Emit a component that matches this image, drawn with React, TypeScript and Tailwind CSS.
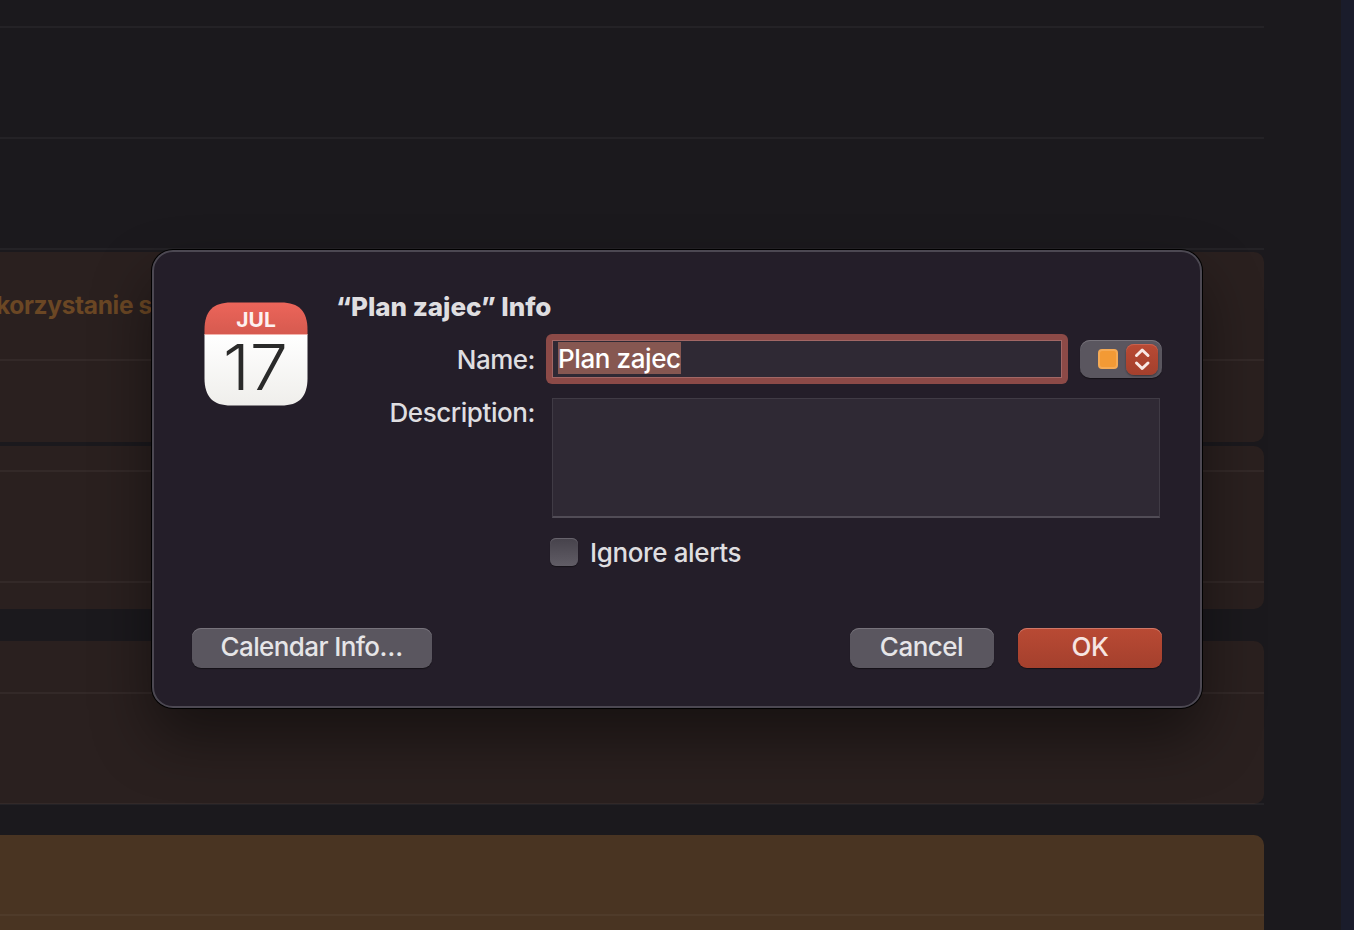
import React from 'react';

const hours = [0, 1, 2, 3, 4, 5, 6, 7, 8];

function CalendarIcon() {
  return (
    <svg width="112" height="112" viewBox="0 0 112 112" className="block" aria-hidden="true">
      <defs>
        <linearGradient id="red" x1="0" y1="0" x2="0" y2="1">
          <stop offset="0" stopColor="#ec655a" />
          <stop offset="1" stopColor="#d65a4f" />
        </linearGradient>
        <linearGradient id="paper" x1="0" y1="0" x2="0" y2="1">
          <stop offset="0" stopColor="#ffffff" />
          <stop offset="1" stopColor="#efeeeb" />
        </linearGradient>
        <clipPath id="tile">
          <path d="M4.500 38V32C4.500 13 13 4.500 31 4.500H81C99 4.500 107.500 13 107.500 32V80C107.500 99 99 107.500 81 107.500H31C13 107.500 4.500 99 4.500 80Z" />
        </clipPath>
      </defs>
      <g clipPath="url(#tile)">
        <rect x="4" y="4" width="104" height="32.500" fill="url(#red)" />
        <rect x="4" y="36.500" width="104" height="72" fill="url(#paper)" />
        <rect x="4" y="36" width="104" height="1" fill="#f3b3ac" />
      </g>
      <text x="56" y="28.500" textAnchor="middle" fontSize="20.500" fontWeight="700" fill="#fdf1f0" textLength="39.500" lengthAdjust="spacingAndGlyphs">JUL</text>
      <text x="55.500" y="92" textAnchor="middle" fontSize="63" fontWeight="300" fill="#2a2a2a" textLength="65" lengthAdjust="spacingAndGlyphs">17</text>
    </svg>
  );
}

function Schedule() {
  return (
    <div className="grid h-[930px] w-[1264px] overflow-hidden">
      <div className="col-start-1 row-start-1 flex flex-col pt-[252px]">
        <div className="h-[190px] shrink-0 rounded-r-[10px] bg-[#2a201f] pt-[36px]">
          <p className="ml-[-4px] whitespace-nowrap text-[24.5px] font-bold leading-[34px] tracking-[-0.35px] text-[#6b4724]">korzystanie s</p>
        </div>
        <div className="mt-1 h-[163px] shrink-0 rounded-r-[10px] bg-[#2a201f]" />
        <div className="mt-8 h-[163px] shrink-0 rounded-r-[10px] bg-[#2a201f]" />
        <div className="mt-[31px] h-[111px] shrink-0 rounded-tr-[10px] bg-[#493422]" />
      </div>
      <div className="col-start-1 row-start-1 flex flex-col gap-[109px] pt-[26px]">
        {hours.map((h) => (
          <div key={h} className="h-[2px] shrink-0 bg-white/[0.045] last:bg-white/[0.035]" />
        ))}
      </div>
    </div>
  );
}

function InfoDialog() {
  return (
    <section className="absolute left-[152px] top-[250px] flex h-[458px] w-[1050px] flex-col rounded-[21px] border-2 border-[#4c4852] bg-[#241e29] text-[26px] font-[450] leading-[32px] text-[#dfdee0] shadow-[0_0_0_1px_#000000,0_30px_60px_0_rgba(0,0,0,0.45)]">
      <div className="flex pl-[46px] pt-[38px]">
        <div className="mt-2 shrink-0">
          <CalendarIcon />
        </div>
        <div className="ml-[24px] w-[826px] pl-px pt-px">
          <h1 className="ml-[-1px] whitespace-nowrap font-extrabold tracking-[-0.03px]">“Plan zajec” Info</h1>
          <div className="mt-[11px] flex items-start">
            <label className="mt-[10px] w-[198px] shrink-0 text-right tracking-[-0.5px]">Name:</label>
            <div className="ml-[11px] h-[50px] w-[522px] shrink-0 rounded-[6px] bg-[#8c4a47] p-[6px]">
              <div className="flex h-[38px] items-start border border-[#a26765] bg-[#2f2934] pl-[5px] pt-[1px]">
                <span className="h-[32px] w-[123px] whitespace-nowrap bg-[#865751] leading-[34px] tracking-[-0.4px] text-white">Plan zajec</span>
              </div>
            </div>
            <button className="ml-3 mt-[6px] flex h-[38px] w-[82px] shrink-0 items-center rounded-[10px] bg-[#5a565f] pl-[18px] shadow-[inset_0_1px_0_#77737b,0_1px_1px_rgba(0,0,0,0.45)]">
              <span className="h-5 w-5 rounded-[4px] border-2 border-[#f5aa55] bg-[#f39a35]" />
              <span className="ml-2 mt-px h-[31px] w-8 rounded-[8px] bg-gradient-to-b from-[#b94a34] to-[#a4402d] shadow-[0_1px_2px_rgba(0,0,0,0.4),inset_0_1px_0_#c8624f]">
                <svg width="32" height="31" viewBox="0 0 32 31" fill="none" stroke="#f8e8e5" strokeWidth="3" strokeLinecap="round" strokeLinejoin="round">
                  <path d="M10.500 11.500L16.200 6L22 11.500M10.500 19L16.200 24.500L22 19" />
                </svg>
              </span>
            </button>
          </div>
          <div className="mt-[13px] flex items-start">
            <label className="w-[198px] shrink-0 text-right tracking-[-0.43px]">Description:</label>
            <div className="ml-[17px] mt-px h-[120px] w-[608px] shrink-0 border border-b-2 border-[#403b45] border-b-[#514c56] bg-[#2f2934]" />
          </div>
          <label className="ml-[213px] mt-[20px] flex items-start">
            <span className="h-7 w-7 rounded-[6px] bg-gradient-to-b from-[#46424b] to-[#615d66] shadow-[inset_0_1px_0_#67636c,0_1px_1px_rgba(0,0,0,0.4)]" />
            <span className="ml-3 mt-[-1px] whitespace-nowrap tracking-[-0.37px]">Ignore alerts</span>
          </label>
        </div>
      </div>
      <footer className="mt-auto flex pb-[38px] pl-[38px] pr-[38px] text-[#e6e5e7]">
        <button className="flex h-10 w-[240px] justify-center rounded-[9px] bg-[#5a565f] pr-px pt-[3px] tracking-[-0.6px] shadow-[inset_0_1px_0_#77737b,0_1px_1px_rgba(0,0,0,0.45)]">Calendar Info…</button>
        <button className="ml-auto flex h-10 w-36 justify-center rounded-[9px] bg-[#5a565f] pr-px pt-[3px] tracking-[-0.5px] shadow-[inset_0_1px_0_#77737b,0_1px_1px_rgba(0,0,0,0.45)]">Cancel</button>
        <button className="ml-6 flex h-10 w-36 justify-center rounded-[9px] bg-gradient-to-b from-[#b94a34] to-[#a4402d] pt-[3px] tracking-[-0.3px] text-[#f6e5e2] shadow-[inset_0_1px_0_#cf7767,0_1px_1px_rgba(0,0,0,0.45)]">OK</button>
      </footer>
    </section>
  );
}

export default function App() {
  return (
    <main className="relative flex h-[930px] w-[1354px] justify-between overflow-hidden bg-[#1b191d] font-['Inter','Noto_Sans',sans-serif]">
      <Schedule />
      <div className="w-[13px] bg-[#1a1c2b]" />
      <InfoDialog />
    </main>
  );
}
